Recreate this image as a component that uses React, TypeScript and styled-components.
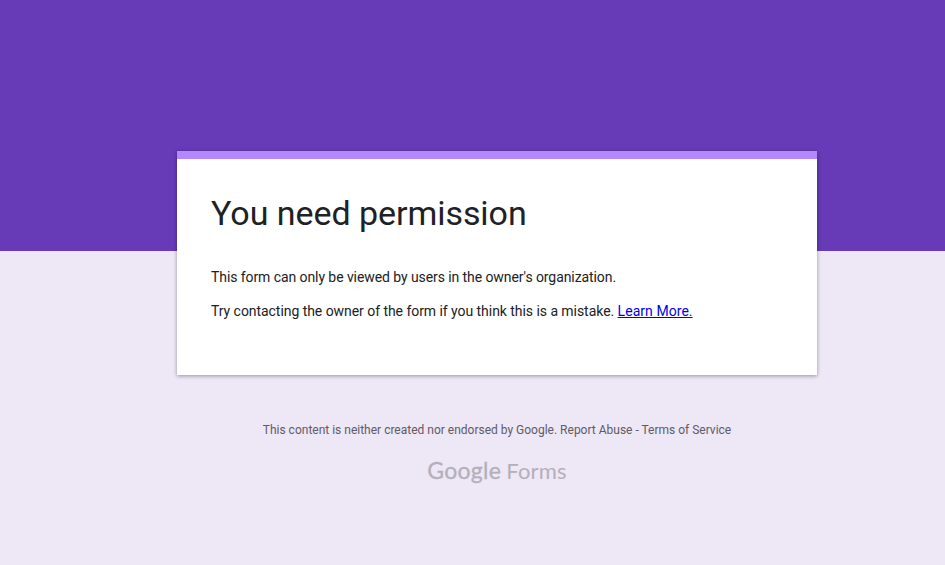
import React from "react";
import styled, { createGlobalStyle } from "styled-components";

const Global = createGlobalStyle`
  html, body { margin: 0; padding: 0; height: 100%; }
  body {
    font-family: Roboto, "Liberation Sans", sans-serif;
    background: linear-gradient(to bottom, #673ab7 0, #673ab7 251px, #ede7f6 251px, #ede7f6 100%);
    background-repeat: no-repeat;
    background-color: #ede7f6;
  }
`;

const Page = styled.main`
  min-height: 565px;
  display: flex;
  flex-direction: column;
  align-items: center;
  padding: 151px 0 0 49px;
  box-sizing: border-box;
`;

const Card = styled.section`
  width: 640px;
  height: 224px;
  box-sizing: border-box;
  background: #fff;
  border-top: 8px solid #b388ff;
  padding: 33px 34px 0;
  box-shadow: 0 1px 4px 0 rgba(0, 0, 0, 0.37);
`;

const Title = styled.h1`
  margin: 0 0 33px;
  font-size: 34px;
  line-height: 42px;
  font-weight: 400;
  letter-spacing: -0.05px;
  color: #202124;
`;

const Message = styled.p<{ $tracking: number }>`
  margin: 0 0 14px;
  font-size: 14px;
  line-height: 20px;
  letter-spacing: ${(p) => p.$tracking}px;
  color: #202124;
`;

const Link = styled.a`
  color: #0000ee;
  text-decoration: underline;
  letter-spacing: 0.05px;
`;

const Disclaimer = styled.p`
  margin: 47px 0 0;
  font-size: 12px;
  line-height: 16px;
  color: #5f5a66;
`;

const Brand = styled.div`
  margin-top: 17px;
  display: flex;
  align-items: baseline;
  gap: 5px;
  color: #b4afba;
  font-family: Lato, Roboto, sans-serif;
  line-height: 30px;
`;

const BrandMain = styled.span`
  font-size: 23px;
  font-weight: 400;
  letter-spacing: 0.3px;
  -webkit-text-stroke: 0.3px #b4afba;
`;

const BrandProduct = styled.span`
  font-size: 22px;
  font-weight: 400;
  letter-spacing: 0.2px;
`;

export default function App() {
  return (
    <>
      <Global />
      <Page>
        <Card>
          <Title>You need permission</Title>
          <Message $tracking={-0.08}>This form can only be viewed by users in the owner's organization.</Message>
          <Message $tracking={-0.05}>
            Try contacting the owner of the form if you think this is a mistake. <Link href="#">Learn More.</Link>
          </Message>
        </Card>
        <Disclaimer>This content is neither created nor endorsed by Google. Report Abuse - Terms of Service</Disclaimer>
        <Brand>
          <BrandMain>Google</BrandMain>
          <BrandProduct>Forms</BrandProduct>
        </Brand>
      </Page>
    </>
  );
}
